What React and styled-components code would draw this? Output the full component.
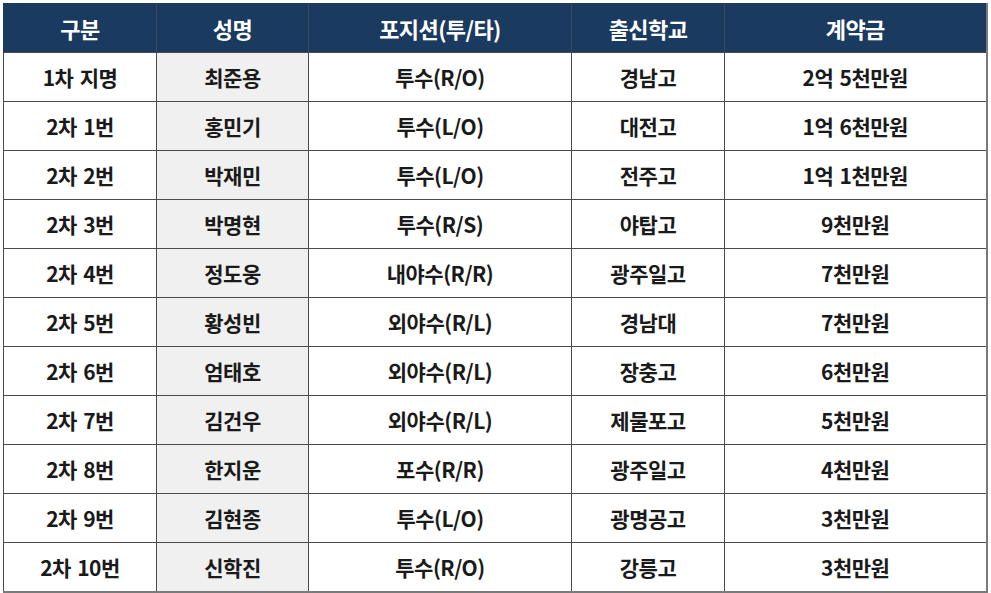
import React from 'react'
import styled, { createGlobalStyle } from 'styled-components'

const GlobalStyle = createGlobalStyle`
  html, body {
    margin: 0;
    padding: 0;
    background: #ffffff;
  }
  body {
    font-family: "Noto Sans CJK KR", "Noto Sans", sans-serif;
  }
`

// page wrapper
const Page = styled.div`
  width: 991px;
  height: 593px;
  padding: 3px 0 0 3px;
  box-sizing: border-box;
`

const Table = styled.table`
  width: 983px;
  border-collapse: collapse;
  table-layout: fixed;
  border-right: 2px solid #7a7a7a;
  border-bottom: 2px solid #7a7a7a;
`

const HeadCell = styled.th`
  height: 49px;
  padding: 0;
  background: #1b3a5f;
  color: #ffffff;
  font-size: 22px;
  font-weight: 700;
  letter-spacing: -0.6px;
  word-spacing: 2px;
  text-align: center;
  border-left: 1px solid #3a4a5c;
  &:first-child {
    border-left: 1px solid #1b3a5f;
  }
`

const Row = styled.tr`
  height: 49px;
`

const Cell = styled.td`
  padding: 0;
  text-align: center;
  font-size: 21px;
  font-weight: 700;
  letter-spacing: -0.5px;
  word-spacing: 2px;
  color: #1a1a1a;
  background: ${p => (p.$shade ? '#f0f0f0' : '#ffffff')};
  border: 1px solid #4a4a4a;
`

const columns = [
  { title: '구분', width: 153 },
  { title: '성명', width: 152 },
  { title: '포지션(투/타)', width: 263 },
  { title: '출신학교', width: 153 },
  { title: '계약금', width: 262 },
]

const players = [
  ['1차 지명', '최준용', '투수(R/O)', '경남고', '2억 5천만원'],
  ['2차 1번', '홍민기', '투수(L/O)', '대전고', '1억 6천만원'],
  ['2차 2번', '박재민', '투수(L/O)', '전주고', '1억 1천만원'],
  ['2차 3번', '박명현', '투수(R/S)', '야탑고', '9천만원'],
  ['2차 4번', '정도웅', '내야수(R/R)', '광주일고', '7천만원'],
  ['2차 5번', '황성빈', '외야수(R/L)', '경남대', '7천만원'],
  ['2차 6번', '엄태호', '외야수(R/L)', '장충고', '6천만원'],
  ['2차 7번', '김건우', '외야수(R/L)', '제물포고', '5천만원'],
  ['2차 8번', '한지운', '포수(R/R)', '광주일고', '4천만원'],
  ['2차 9번', '김현종', '투수(L/O)', '광명공고', '3천만원'],
  ['2차 10번', '신학진', '투수(R/O)', '강릉고', '3천만원'],
]

const App = () => (
  <Page>
    <GlobalStyle />
    <Table>
      <colgroup>
        {columns.map(c => (
          <col key={c.title} style={{ width: c.width }} />
        ))}
      </colgroup>
      <thead>
        <tr>
          {columns.map(c => (
            <HeadCell key={c.title}>{c.title}</HeadCell>
          ))}
        </tr>
      </thead>
      <tbody>
        {players.map(row => (
          <Row key={row[0]}>
            {row.map((val, i) => (
              <Cell key={i} $shade={i === 1}>
                {val}
              </Cell>
            ))}
          </Row>
        ))}
      </tbody>
    </Table>
  </Page>
)

export default App
